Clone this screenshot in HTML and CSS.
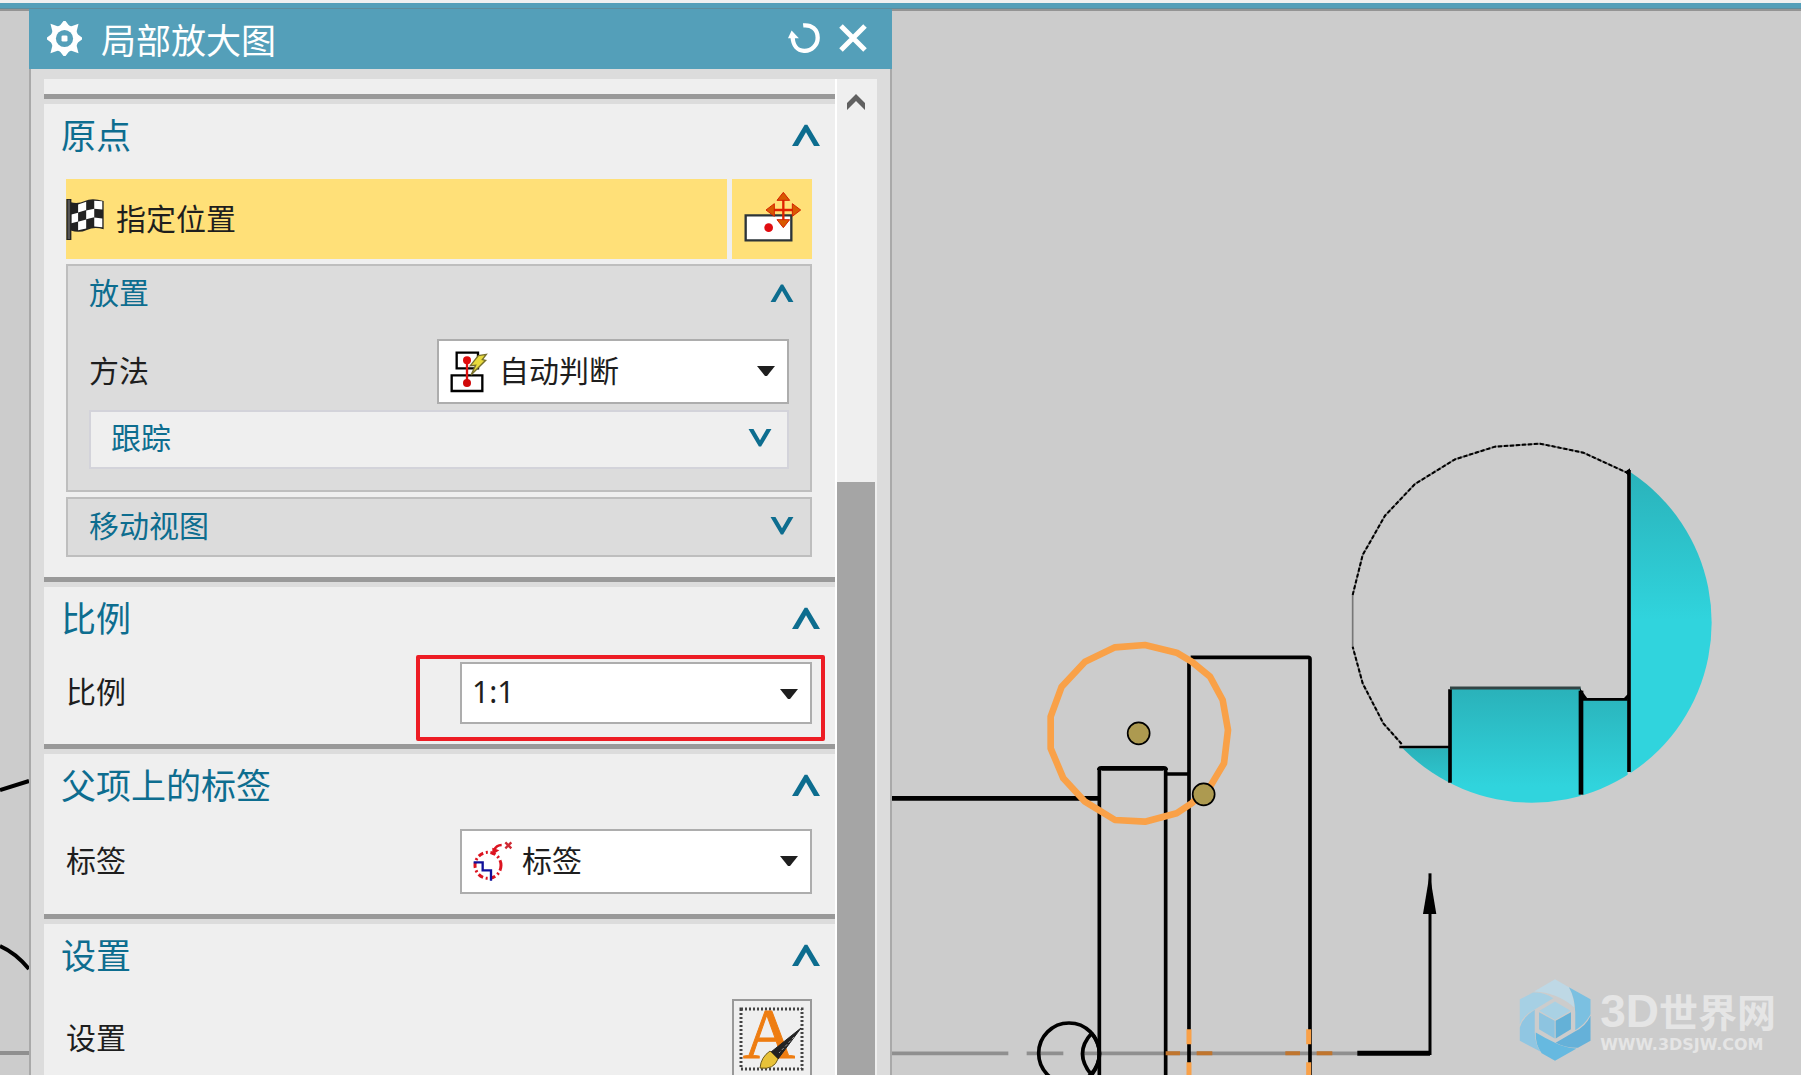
FILE: index.html
```html
<!DOCTYPE html>
<html lang="zh-CN">
<head>
<meta charset="utf-8">
<title>局部放大图</title>
<link rel="stylesheet" href="styles.css">
</head>
<body>
<svg class="defs" aria-hidden="true">
  <symbol id="up" viewBox="0 0 84 66"><path d="M0 66 38 2h8l38 64H66L42 25 18 66z"/></symbol>
  <symbol id="down" viewBox="0 0 84 66"><path d="M0 0 38 64h8L84 0H66L42 41 18 0z"/></symbol>
  <symbol id="caret" viewBox="0 0 54 30"><path d="M0 0h54L30 30h-6z"/></symbol>
</svg>
<div class="topbar"></div>
<main class="workspace">
  <svg class="drawing" viewBox="0 9 1801 1066" preserveAspectRatio="xMinYMin slice" role="img" aria-label="工程图">
    <defs>
      <linearGradient id="g1" gradientUnits="userSpaceOnUse" x1="0" y1="150" x2="0" y2="600"><stop offset="0" stop-color="#2ab2ba"/><stop offset="1" stop-color="#30d4dd"/></linearGradient>
      <linearGradient id="g2" gradientUnits="userSpaceOnUse" x1="0" y1="808" x2="0" y2="1100"><stop offset="0" stop-color="#2ab2ba"/><stop offset="1" stop-color="#30d4dd"/></linearGradient>
      <linearGradient id="g3" gradientUnits="userSpaceOnUse" x1="0" y1="985" x2="0" y2="1150"><stop offset="0" stop-color="#2ab2ba"/><stop offset="1" stop-color="#30d4dd"/></linearGradient>
      <clipPath id="round"><circle cx="605" cy="608" r="540"/></clipPath>
    </defs>
    <g fill="none" stroke="#000" stroke-width="4">
      <path d="M0 790 29 781M0 946Q16 953 29 969"/>
      <path d="M0 1053H29" stroke="#8f8f8f"/>
    </g>
    <g transform="translate(1000 620) scale(.33333)" fill="none" stroke="#000" stroke-width="11">
      <path d="M-330 1300H25M80 1300H190M250 1300H1075" stroke="#8f8f8f" stroke-width="11"/>
      <path d="M-330 535H298" stroke-width="14"/>
      <path d="M298 1370V445M497 445V1370M497 462H567M567 1370V112M572 112H925Q930 112 930 117V1370"/>
      <path d="M298 450Q298 445 304 445H491Q497 445 497 450" stroke-width="14"/>
      <circle cx="207" cy="1300" r="91"/>
      <path d="M275 1240Q220 1300 275 1365M275 1240Q322 1300 275 1365"/>
      <path d="M497 1300H540M590 1300H637M856 1300H900M950 1300H997" stroke="#c0752e" stroke-width="12"/>
      <path d="M567 1228V1273M567 1327V1370M926 1228V1273M926 1327V1370" stroke="#f9a148" stroke-width="15"/>
      <path d="M1072 1300H1290" stroke-width="15"/>
      <path d="M1290 1305V760" stroke-width="9"/>
      <path d="M1289 762 1309 882H1269z" fill="#000" stroke="none"/>
      <path d="M152 290 185 200 255 125 345 82 435 75 530 98 575 125 630 170 668 240 684 330 672 430 630 500 575 550 530 580 435 605 345 600 255 545 190 475 152 385z" stroke="#f9a148" stroke-width="20" stroke-linejoin="round"/>
      <g fill="#ad9a50" stroke-width="5"><circle cx="416" cy="340" r="33"/><circle cx="611" cy="523" r="33"/></g>
    </g>
    <g transform="translate(1330 420) scale(.33333)" fill="none" stroke="#000">
      <path d="M215 972 160 910 98 790 68 680V525L98 405 165 287 255 192 375 118 495 80 630 71 760 98 895 160" stroke="#777" stroke-width="5"/>
      <path d="M215 972 160 910 98 790 68 680M68 525 98 405 165 287 255 192 375 118 495 80 630 71 760 98 895 160" stroke-width="6" stroke-dasharray="12 6"/>
      <g clip-path="url(#round)" stroke="none">
        <path d="M902 140H1160V1150H902z" fill="url(#g1)"/>
        <path d="M362 804H752V1160H362zM758 840H893V1160H758z" fill="url(#g2)"/>
        <path d="M200 985H357V1150H200z" fill="url(#g3)"/>
      </g>
      <path d="M897 150V1056M360 808V1088" stroke-width="11"/>
      <path d="M753 812V1124" stroke-width="14"/>
      <path d="M360 804H752" stroke="#344" stroke-width="9"/>
      <path d="M208 981H360M755 838H893" stroke-width="8"/>
      <path d="M750 805 773 836H750zM880 836 897 818V836zM885 155 900 145V175z" fill="#000" stroke="none"/>
    </g>
  </svg>

  <form class="dialog">
    <header class="titlebar">
      <svg class="gear" viewBox="0 0 106 106" aria-hidden="true"><g fill="#fff"><circle cx="53" cy="53" r="42"/><path d="M53 0 65 16H41zM53 106 65 90H41zM0 53 16 41V65zM106 53 90 41V65zM14 12 36 20 20 36zM92 12 86 36 70 20zM14 94 20 70 36 86zM92 94 70 86 86 70z" stroke="#fff" stroke-width="5"/></g><circle cx="53" cy="53" r="26" fill="#549fb9"/><rect x="44" y="44" width="18" height="18" rx="4" fill="#fff"/></svg>
      <h1>局部放大图</h1>
      <button type="button" class="plain" aria-label="重置"><svg width="32" height="30" viewBox="0 0 97 90"><path d="M46 7C72 4 90 20 90 44 90 66 72 84 50 84 29 84 15 68 14 42" fill="none" stroke="#fff" stroke-width="13"/><path d="M0 46 11 22 33 46z" fill="#fff"/></svg></button>
      <button type="button" class="plain" aria-label="关闭"><svg width="28" height="28" viewBox="0 0 28 28"><path d="M2 2 26 26M26 2 2 26" stroke="#fff" stroke-width="5"/></svg></button>
    </header>
    <div class="body">
      <div class="content">
        <div class="previous"></div>

        <section class="section">
          <div class="heading"><h2>原点</h2><button type="button" class="plain" aria-label="折叠原点"><svg class="chev"><use href="#up"/></svg></button></div>
          <div class="stack">
            <div class="pick">
              <button type="button" class="locate">
                <svg width="39" height="41" viewBox="0 0 116 122" aria-hidden="true"><path d="M14 10Q36 16 56 6T112 6V90Q84 82 62 92T14 94z" fill="#222"/><g fill="#fff"><path d="M36 16 60 8V33L36 40zM84 5 108 7V31L84 29zM16 46 36 41V67L16 72zM60 34 84 29V54L60 60zM36 68 60 61V88L36 93zM84 55 108 58V84L84 82z"/></g><path d="M3 0H14V121H3z" fill="#555" stroke="#222" stroke-width="4"/></svg>
                指定位置
              </button>
              <button type="button" class="origin" aria-label="原点工具">
                <svg width="80" height="80" viewBox="0 0 240 240"><path d="M41 109H178V184H41z" fill="#fff" stroke="#2c3438" stroke-width="7"/><circle cx="110" cy="146" r="13" fill="#e00c10"/><path d="M154 50V140M110 93H198" stroke="#e02000" stroke-width="7"/><path d="M154 40 173 64H135zM154 146 173 122H135zM102 93 127 74V112zM206 93 181 74V112z" fill="#d85a00" stroke="#d52000" stroke-width="3"/></svg>
              </button>
            </div>
            <div class="group">
              <div class="subheading"><h3>放置</h3><button type="button" class="plain" aria-label="折叠放置"><svg class="chev small"><use href="#up"/></svg></button></div>
              <div class="row inner">
                <label for="method">方法</label>
                <div class="field">
                  <select id="method" class="with-icon"><option>自动判断</option></select>
                  <svg class="mark" width="40" height="44" viewBox="60 299 120 132" aria-hidden="true"><g fill="#fff" stroke="#000" stroke-width="7"><path d="M83 307H147V354H83z"/><path d="M68 375H160V422H68z"/></g><path d="M114 330V398" stroke="#e01010" stroke-width="7"/><circle cx="114" cy="330" r="12" fill="#e00c0c"/><circle cx="114" cy="398" r="12" fill="#d00808"/><path d="M148 316 172 312 160 328 170 330 126 374 140 345 124 346z" fill="#e8da3c" stroke="#77702c" stroke-width="4"/></svg>
                  <svg class="caret"><use href="#caret"/></svg>
                </div>
              </div>
              <div class="track"><h3>跟踪</h3><button type="button" class="plain" aria-label="展开跟踪"><svg class="chev small"><use href="#down"/></svg></button></div>
            </div>
            <div class="group closed">
              <div class="subheading"><h3>移动视图</h3><button type="button" class="plain" aria-label="展开移动视图"><svg class="chev small"><use href="#down"/></svg></button></div>
            </div>
          </div>
        </section>

        <section class="section">
          <div class="heading"><h2>比例</h2><button type="button" class="plain" aria-label="折叠比例"><svg class="chev"><use href="#up"/></svg></button></div>
          <div class="row">
            <label for="scale">比例</label>
            <div class="field short">
              <select id="scale"><option>1:1</option></select>
              <svg class="caret"><use href="#caret"/></svg>
              <div class="highlight"></div>
            </div>
          </div>
        </section>

        <section class="section">
          <div class="heading"><h2>父项上的标签</h2><button type="button" class="plain" aria-label="折叠父项上的标签"><svg class="chev"><use href="#up"/></svg></button></div>
          <div class="row">
            <label for="tag">标签</label>
            <div class="field">
              <select id="tag" class="with-icon"><option>标签</option></select>
              <svg class="mark" width="41" height="42" viewBox="125 61 123 126" aria-hidden="true"><circle cx="173" cy="137" r="39" fill="none" stroke="#dc1420" stroke-width="9" stroke-dasharray="16 8 6 8"/><path d="M130 128H157V152H182V183" fill="none" stroke="#10109a" stroke-width="7"/><path d="M192 90Q198 77 214 76" fill="none" stroke="#dc1420" stroke-width="8"/><path d="M186 106 186 84 207 92z" fill="#dc1420"/><path d="M225 68 243 86M243 68 225 86" stroke="#cf2a34" stroke-width="7"/></svg>
              <svg class="caret"><use href="#caret"/></svg>
            </div>
          </div>
        </section>

        <section class="section">
          <div class="heading"><h2>设置</h2><button type="button" class="plain" aria-label="折叠设置"><svg class="chev"><use href="#up"/></svg></button></div>
          <div class="row">
            <label for="settings">设置</label>
            <button type="button" id="settings" class="settings">
              <svg width="76" height="76" viewBox="0 0 76 76" aria-hidden="true"><rect x="7" y="8" width="61" height="60" fill="none" stroke="#444" stroke-width="3" stroke-dasharray="2 2"/><text x="9" y="57" class="letter">A</text><path d="M67 27 37 51 44 58z" fill="#222" stroke="#222"/><path d="M60 36 45 52" stroke="#999" stroke-dasharray="3 2"/><path d="M36 50Q27 56 26 67 40 69 44 58z" fill="#e8c238" stroke="#6f5c1c"/></svg>
            </button>
          </div>
        </section>
      </div>
      <div class="scrollbar">
        <button type="button" class="plain" aria-label="向上滚动"><svg width="18" height="16" viewBox="0 0 18 16"><path d="M0 9 9 0 18 9V16L9 7 0 16z" fill="#606060"/></svg></button>
        <div class="thumb"></div>
      </div>
    </div>
  </form>

  <div class="watermark">
    <svg width="72" height="82" viewBox="115 89 216 247" aria-hidden="true">
      <path d="M160 127 223 90 265 114Q280 140 281 175 230 130 160 127" fill="#bed8e5"/>
      <path d="M265 114 330 150V195Q315 225 284 243V190Q283 145 265 114" fill="#7bc0e1"/>
      <path d="M330 200V275L292 296Q255 297 225 281L283 247Q315 232 330 200" fill="#65b1d9"/>
      <path d="M165 250Q190 265 223 281 255 297 288 298L223 335 183 313Q163 285 165 250" fill="#66b9e0"/>
      <path d="M162 182V250Q163 285 180 308L117 275V235Q125 205 162 182" fill="#90c6e2"/>
      <path d="M117 225V150L157 130Q190 128 218 147L163 180Q130 195 117 225" fill="#a6d0e4"/>
      <path d="M223 157 270 185 223 212 176 185z" fill="#a9d1e4"/>
      <path d="M175 189 222 215V268L175 240z" fill="#8dc4e0"/>
      <path d="M271 189 225 215V268L271 240z" fill="#64b1d7"/>
    </svg>
    <div class="site"><p class="name"><span>3D</span>世界网</p><p class="url">WWW.3DSJW.COM</p></div>
  </div>
</main>
</body>
</html>
```
FILE: styles.css
```css
* { box-sizing: border-box; }

html, body { height: 100%; }

body {
  margin: 0;
  display: flex;
  flex-direction: column;
  overflow: hidden;
  background: #ccc;
  color: #1e1e1e;
  font: 30px/40px "Noto Sans", "Noto Sans CJK SC", sans-serif;
}

h1, h2, h3, p { margin: 0; font-weight: 400; }
button, select { font: inherit; color: inherit; }
svg { display: block; flex: none; }
.defs { position: absolute; width: 0; height: 0; }

.topbar {
  flex: none;
  height: 9px;
  border-top: 3px solid #f0f0f0;
  border-bottom: 1px solid #5f8d9c;
  background: #549fb9;
}

.workspace {
  position: relative;
  flex: 1;
  min-height: 0;
  display: grid;
  grid-template-columns: 29px 863fr 909fr;
  border-top: 2px solid #949494;
}

.drawing {
  position: absolute;
  top: -2px;
  left: 0;
  width: 100%;
  height: calc(100% + 2px);
}

.dialog {
  position: relative;
  grid-column: 2;
  margin-top: -2px;
  min-height: 0;
  display: flex;
  flex-direction: column;
}

.plain {
  display: flex;
  padding: 0;
  border: 0;
  background: none;
}

.titlebar {
  flex: none;
  display: flex;
  align-items: center;
  height: 60px;
  padding: 0 25px 2px 18px;
  gap: 19px;
  background: #549fb9;
  color: #fff;
}
.titlebar h1 { flex: 1; padding-top: 5px; font-size: 35px; }
.gear { width: 35px; height: 35px; }

.body {
  flex: 1;
  min-height: 0;
  display: flex;
  padding: 10px 13px 0 13px;
  border: solid #a9a9a9;
  border-width: 0 2px;
  background: #dcdcdc;
  overflow: hidden;
}

.content { flex: 1; background: #efefef; }
.previous { height: 15px; }

.section {
  border-top: 5px solid #999;
  padding-bottom: 20px;
}
.section::before {
  content: "";
  display: block;
  height: 5px;
  background: #dcdcdc;
}

.heading, .subheading, .track {
  display: flex;
  align-items: center;
  justify-content: space-between;
  color: #0d6d8f;
}
.heading { height: 64px; margin-bottom: 11px; padding: 0 15px 0 17px; }
.heading .plain { padding-bottom: 3px; }
.heading h2 { font-size: 35px; }
h3 { font-size: 30px; }
.subheading { height: 56px; padding: 0 16px 2px 21px; }

.chev { width: 28px; height: 22px; fill: #0d6d8f; }
.small { width: 24px; height: 18px; }

.stack { display: grid; gap: 5px; padding: 0 23px 0 22px; }

.pick { display: flex; gap: 5px; height: 80px; }
.pick button { padding: 0; border: 0; background: #ffe078; }
.locate {
  flex: 1;
  display: flex;
  align-items: center;
  gap: 11px;
}
.origin { width: 80px; }

.group {
  border: 2px solid #bebebe;
  background: #dcdcdc;
  padding-bottom: 21px;
}
.closed { padding-bottom: 0; }

.row {
  display: flex;
  align-items: center;
  justify-content: space-between;
  padding: 0 23px 0 22px;
}
.row label { padding-bottom: 2px; }
.inner { margin-top: 17px; padding: 0 21px; }

.field { position: relative; width: 352px; height: 65px; }
.short { height: 62px; }
.field select {
  width: 100%;
  height: 100%;
  padding: 0 48px 2px 10px;
  border: 2px solid #adadad;
  border-radius: 0;
  background: #fff;
  appearance: none;
}
.field .with-icon { padding-left: 60px; }

.mark, .caret { position: absolute; pointer-events: none; }
.mark { left: 12px; top: 11px; }
.caret { right: 14px; top: 27px; width: 18px; height: 10px; fill: #1e1e1e; }

.highlight {
  position: absolute;
  inset: -7px -13px -17px -44px;
  border: 4px solid #ed1c24;
  border-radius: 2px;
  pointer-events: none;
}

.track {
  height: 59px;
  margin: 6px 21px 0;
  padding: 0 15px 4px 20px;
  border: 2px solid #d3d3da;
  background: #efefef;
}

.settings {
  width: 80px;
  height: 80px;
  padding: 0;
  border: 2px solid #999;
  background: #efefef;
}
.settings svg { overflow: visible; }
.letter { font: 72px "Liberation Serif", serif; fill: #ee7d11; stroke: #ee7d11; }

.scrollbar {
  flex: none;
  width: 42px;
  display: flex;
  flex-direction: column;
  border-left: 2px solid #fff;
  background: #efefef;
}
.scrollbar .plain { height: 403px; padding: 15px 0 0 10px; }
.thumb { flex: 1; width: 38px; background: #a5a5a5; }

.watermark {
  position: absolute;
  right: 25px;
  bottom: 14px;
  display: flex;
  gap: 9px;
  color: #e5e5e5;
}
.site { padding-top: 7px; }
.name { font: 700 39px/48px "Noto Sans CJK SC", sans-serif; }
.name span { font: 700 46px/48px "Liberation Sans", sans-serif; }
.url { font: 700 16px/20px "DejaVu Sans", sans-serif; }
```
